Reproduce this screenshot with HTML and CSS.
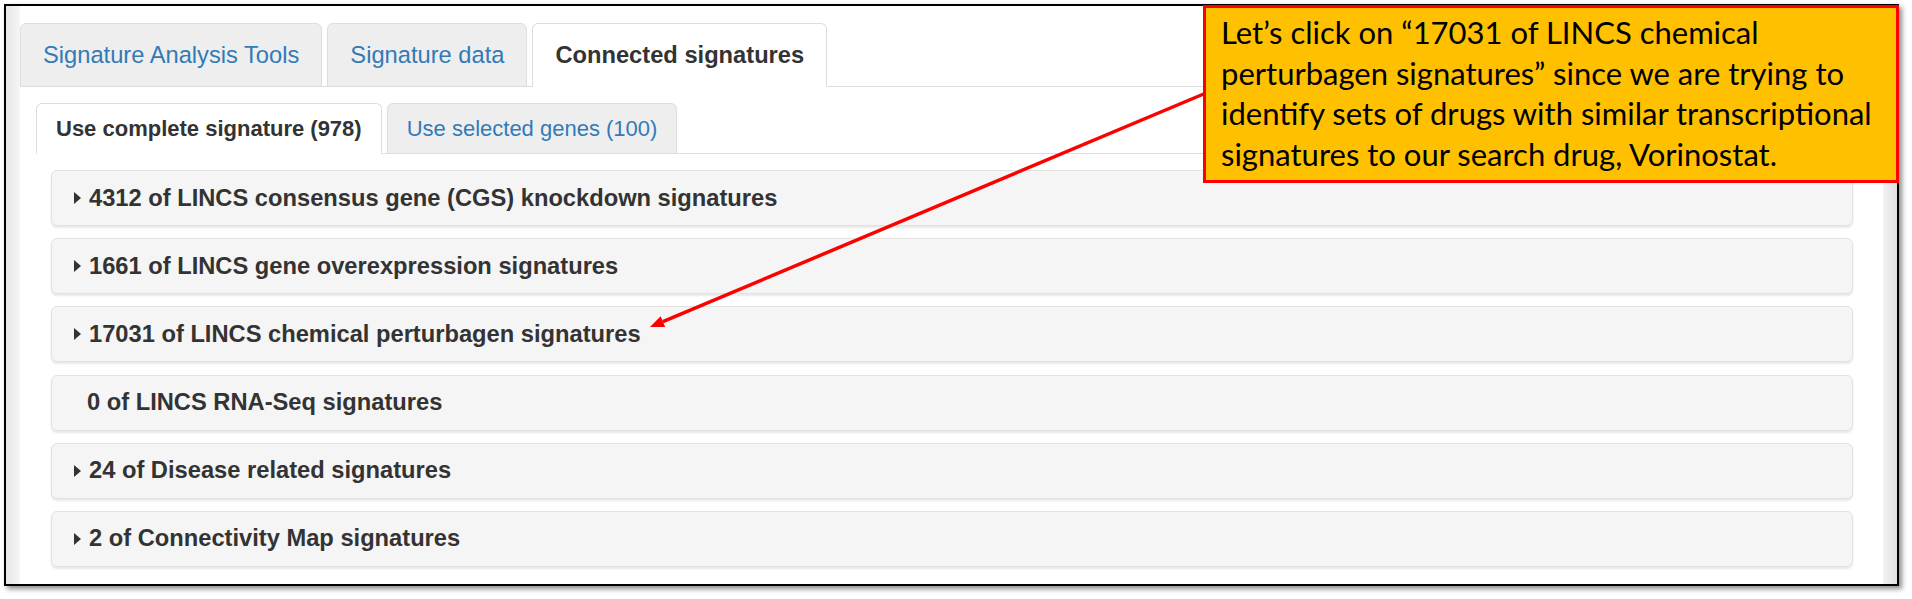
FILE: index.html
```html
<!DOCTYPE html>
<html lang="en">
<head>
  <meta charset="UTF-8" />
  <meta name="viewport" content="width=device-width, initial-scale=1.0" />
  <title>Connected signatures</title>
  <link rel="stylesheet" href="styles.css">
</head>
<body>
  <div class="frame">
    <div class="page">
      <ul class="tabs">
        <li><a href="#">Signature Analysis Tools</a></li>
        <li><a href="#">Signature data</a></li>
        <li class="active"><a href="#">Connected signatures</a></li>
      </ul>

      <div class="tab-content">
        <ul class="tabs sub-tabs">
          <li class="active"><a href="#">Use complete signature (978)</a></li>
          <li><a href="#">Use selected genes (100)</a></li>
        </ul>

        <div class="sub-content">
          <div class="sig-panel"><span class="caret"></span>4312 of LINCS consensus gene (CGS) knockdown signatures</div>
          <div class="sig-panel"><span class="caret"></span>1661 of LINCS gene overexpression signatures</div>
          <div class="sig-panel"><span class="caret"></span>17031 of LINCS chemical perturbagen signatures</div>
          <div class="sig-panel"><span class="caret empty"></span>0 of LINCS RNA-Seq signatures</div>
          <div class="sig-panel"><span class="caret"></span>24 of Disease related signatures</div>
          <div class="sig-panel"><span class="caret"></span>2 of Connectivity Map signatures</div>
        </div>
      </div>
    </div>
  </div>

  <!-- annotation overlay -->
  <svg class="arrow" width="1912" height="599" viewBox="0 0 1912 599">
    <line x1="1206" y1="93" x2="662.9" y2="321.6" stroke="#ff0000" stroke-width="3.5" />
    <polygon points="650,327 665.2,327 660.6,316.2" fill="#ff0000" />
  </svg>

  <div class="callout">
    Let’s click on “17031 of LINCS chemical<br>
    perturbagen signatures” since we are trying to<br>
    identify sets of drugs with similar transcriptional<br>
    signatures to our search drug, Vorinostat.
  </div>
</body>
</html>
```

FILE: styles.css
```css
html, body {
  margin: 0;
  padding: 0;
  background: #fff;
}

body {
  position: relative;
  width: 1912px;
  height: 599px;
  overflow: hidden;
  font-family: "Liberation Sans", Arial, sans-serif;
  color: #333;
}

.frame {
  margin: 4px 0 0 4px;
  width: 1895px;
  height: 582px;
  box-sizing: border-box;
  border: 2px solid #000;
  box-shadow: 3px 3px 5px rgba(0, 0, 0, 0.45);
  background:
    linear-gradient(to right, #e6e6e6, #f6f6f6) left top / 14px 100% no-repeat,
    linear-gradient(to right, #f2f2f2, #e0e0e0) right top / 14px 100% no-repeat,
    #fff;
  overflow: hidden;
}

.page {
  padding: 17px 14px 0;
  height: 100%;
  box-sizing: border-box;
}

.tab-content {
  background: #fff;
  padding: 16px 15px 0 16px;
  height: 100%;
}

/* tabs */
.tabs {
  display: flex;
  gap: 5px;
  list-style: none;
  margin: 0;
  padding: 0;
  border-bottom: 1px solid #ddd;
}

.tabs li {
  margin-bottom: -1px;
}

.tabs a {
  display: block;
  padding: 0 22px;
  line-height: 62px;
  font-size: 23.7px;
  color: #337ab7;
  text-decoration: none;
  background: #eee;
  border: 1px solid #ddd;
  border-radius: 6px 6px 0 0;
}

.tabs .active a {
  background: #fff;
  border-bottom-color: #fff;
  color: #333;
  font-weight: bold;
}

.sub-tabs a {
  padding: 0 19px;
  line-height: 49px;
  font-size: 22px;
}

/* signature panels */
.sub-content {
  padding: 16px 15px 0;
}

.sig-panel {
  display: flex;
  align-items: center;
  height: 56px;
  box-sizing: border-box;
  margin-bottom: 12.2px;
  padding-left: 22px;
  background: #f5f5f5;
  border: 1px solid #e2e2e2;
  border-radius: 6px;
  box-shadow: 0 2px 2px rgba(0, 0, 0, 0.09);
  font-size: 23.7px;
  font-weight: bold;
  color: #333;
}

.caret {
  width: 0;
  height: 0;
  border-left: 7px solid #333;
  border-top: 6px solid transparent;
  border-bottom: 6px solid transparent;
  margin-right: 8px;
}

.caret.empty {
  border-left-color: transparent;
  margin-right: 6px;
}

/* annotation */
.arrow {
  position: absolute;
  left: 0;
  top: 0;
  pointer-events: none;
}

.callout {
  position: absolute;
  left: 1203px;
  top: 5px;
  width: 696px;
  height: 178px;
  box-sizing: border-box;
  padding: 4px 8px 0 15px;
  background: #ffc000;
  border: 3px solid #ff0000;
  font-family: Lato, "Open Sans", sans-serif;
  font-size: 31px;
  line-height: 40.7px;
  color: #000;
  white-space: nowrap;
}
```
